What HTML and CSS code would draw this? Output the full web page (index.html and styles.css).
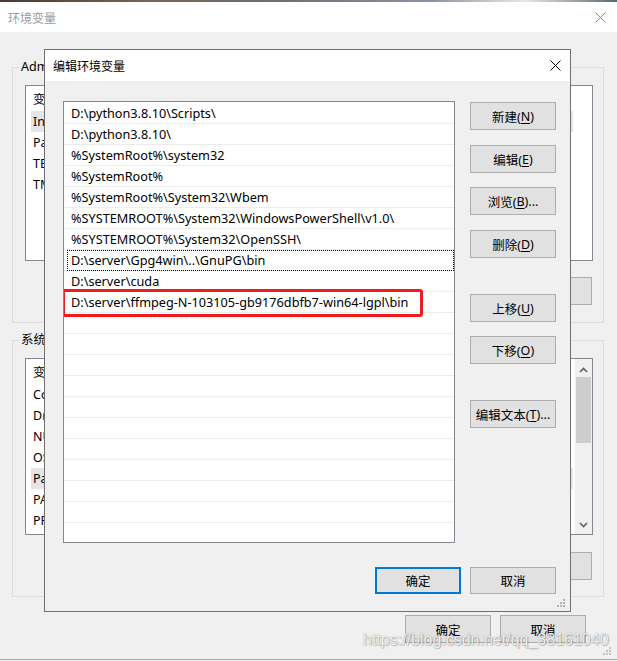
FILE: index.html
```html
<!DOCTYPE html>
<html lang="zh-CN">
<head>
<meta charset="utf-8">
<title>编辑环境变量</title>
<link rel="stylesheet" href="styles.css">
</head>
<body>
<div class="desk"></div>
<div class="win">
  <div class="win-title">
    <span class="win-caption">环境变量</span>
    <svg class="x-icon" width="11" height="11" viewBox="0 0 11 11"><path d="M0.5 0.5L10.5 10.5M10.5 0.5L0.5 10.5" stroke="#8a8a8a" stroke-width="1" fill="none"/></svg>
  </div>
  <div class="win-body">
    <fieldset class="group g1">
      <legend>Administrator 的用户变量(<u>U</u>)</legend>
      <div class="lv lv1">
        <div class="lv-main">
          <div class="lv-head"><span class="c1">变量</span></div>
          <div class="lv-row sel"><span class="c1">IntelliJ IDEA</span></div>
          <div class="lv-row"><span class="c1">Path</span></div>
          <div class="lv-row"><span class="c1">TEMP</span></div>
          <div class="lv-row"><span class="c1">TMP</span></div>
        </div>
      </div>
      <div class="btnrow">
        <button class="btn">新建(<u>N</u>)...</button>
        <button class="btn">编辑(<u>E</u>)...</button>
        <button class="btn">删除(<u>D</u>)</button>
      </div>
    </fieldset>
    <fieldset class="group g2">
      <legend>系统变量(<u>S</u>)</legend>
      <div class="lv lv2">
        <div class="lv-main">
          <div class="lv-head"><span class="c1">变量</span></div>
          <div class="lv-row"><span class="c1">ComSpec</span></div>
          <div class="lv-row"><span class="c1">DriverData</span></div>
          <div class="lv-row"><span class="c1">NUMBER_OF_PROCESSORS</span></div>
          <div class="lv-row"><span class="c1">OS</span></div>
          <div class="lv-row sel"><span class="c1">Path</span></div>
          <div class="lv-row"><span class="c1">PATHEXT</span></div>
          <div class="lv-row"><span class="c1">PROCESSOR_ARCHITECTURE</span></div>
        </div>
        <div class="sb">
          <div class="sb-btn"><svg width="9" height="6" viewBox="0 0 9 6"><path d="M1 5L4.5 1.5L8 5" stroke="#606060" stroke-width="1.6" fill="none"/></svg></div>
          <div class="sb-track"><div class="sb-thumb"></div></div>
          <div class="sb-btn"><svg width="9" height="6" viewBox="0 0 9 6"><path d="M1 1L4.5 4.5L8 1" stroke="#606060" stroke-width="1.6" fill="none"/></svg></div>
        </div>
      </div>
      <div class="btnrow">
        <button class="btn">新建(<u>W</u>)...</button>
        <button class="btn">编辑(<u>I</u>)...</button>
        <button class="btn">删除(<u>L</u>)</button>
      </div>
    </fieldset>
    <div class="win-foot">
      <button class="btn">确定</button>
      <button class="btn">取消</button>
    </div>
  </div>
  <svg class="grip win-grip" width="9" height="9" viewBox="0 0 9 9"><g fill="#c4c4c4"><rect x="6" y="0" width="2" height="2"/><rect x="3" y="3" width="2" height="2"/><rect x="6" y="3" width="2" height="2"/><rect x="0" y="6" width="2" height="2"/><rect x="3" y="6" width="2" height="2"/><rect x="6" y="6" width="2" height="2"/></g></svg>
</div>

<div class="dlg">
  <div class="dlg-title">
    <span class="dlg-caption">编辑环境变量</span>
    <svg class="x-icon" width="11" height="11" viewBox="0 0 11 11"><path d="M0.5 0.5L10.5 10.5M10.5 0.5L0.5 10.5" stroke="#000" stroke-width="1" fill="none"/></svg>
  </div>
  <div class="dlg-body">
    <div class="dlg-main">
      <div class="plist">
        <div class="prow">D:\python3.8.10\Scripts\</div>
        <div class="prow">D:\python3.8.10\</div>
        <div class="prow">%SystemRoot%\system32</div>
        <div class="prow">%SystemRoot%</div>
        <div class="prow">%SystemRoot%\System32\Wbem</div>
        <div class="prow">%SYSTEMROOT%\System32\WindowsPowerShell\v1.0\</div>
        <div class="prow">%SYSTEMROOT%\System32\OpenSSH\</div>
        <div class="prow focus">D:\server\Gpg4win\..\GnuPG\bin</div>
        <div class="prow">D:\server\cuda</div>
        <div class="prow">D:\server\ffmpeg-N-103105-gb9176dbfb7-win64-lgpl\bin</div>
        <div class="prow"></div>
        <div class="prow"></div>
        <div class="prow"></div>
        <div class="prow"></div>
        <div class="prow"></div>
        <div class="prow"></div>
        <div class="prow"></div>
        <div class="prow"></div>
        <div class="prow"></div>
        <div class="prow"></div>
        <div class="mark"></div>
      </div>
      <div class="dlg-btns">
        <button class="btn">新建(<u>N</u>)</button>
        <button class="btn mt1">编辑(<u>E</u>)</button>
        <button class="btn">浏览(<u>B</u>)...</button>
        <button class="btn mt1">删除(<u>D</u>)</button>
        <button class="btn mt22">上移(<u>U</u>)</button>
        <button class="btn">下移(<u>O</u>)</button>
        <button class="btn mt22">编辑文本(<u>T</u>)...</button>
      </div>
    </div>
    <div class="dlg-foot">
      <button class="btn default">确定</button>
      <button class="btn">取消</button>
    </div>
  </div>
  <svg class="grip dlg-grip" width="9" height="9" viewBox="0 0 9 9"><g fill="#b0b0b0"><rect x="6" y="0" width="2" height="2"/><rect x="3" y="3" width="2" height="2"/><rect x="6" y="3" width="2" height="2"/><rect x="0" y="6" width="2" height="2"/><rect x="3" y="6" width="2" height="2"/><rect x="6" y="6" width="2" height="2"/></g></svg>
</div>

<div class="watermark">https://blog.csdn.net/qq_38161040</div>
</body>
</html>
```

FILE: styles.css
```css
* { box-sizing: border-box; }
html, body { margin: 0; padding: 0; }
body {
  width: 617px;
  height: 661px;
  overflow: hidden;
  position: relative;
  background: #f0f0f0;
  font-family: "Noto Sans", "Noto Sans CJK SC", sans-serif;
  font-size: 12.5px;
  color: #000;
}
u { text-decoration: underline; text-underline-offset: 2px; }

.desk {
  height: 2px;
  background: linear-gradient(90deg, #4b3b30 0%, #7d6652 25%, #6b6f76 45%, #8a94a0 70%, #e8e8e8 85%, #5a6a72 100%);
}

/* background window */
.win {
  height: 658px;
  border-bottom: 1px solid #a8a8a8;
  display: flex;
  flex-direction: column;
  position: relative;
}
.win-title {
  height: 30px;
  background: #fff;
  display: flex;
  align-items: center;
  justify-content: space-between;
  padding: 0 11px 0 8px;
  color: #9a9a9a;
  font-size: 12px;
}
.win-caption { font-family: "Noto Sans CJK SC", sans-serif; }
.win-body {
  flex: 1;
  padding: 0 13px 0 12px;
  display: flex;
  flex-direction: column;
}
.group {
  margin: 0;
  min-width: 0;
  border: 1px solid #dcdcdc;
  padding: 10px 10px 17px 12px;
}
.g1 { margin-top: 27px; }
.g2 { margin-top: 9px; padding-bottom: 16px; }
.group legend {
  line-height: 16px;
  padding: 0 2px;
  margin-left: -6px;
}
.lv {
  background: #fff;
  border: 1px solid #828790;
  display: flex;
  overflow: hidden;
}
.lv1 { height: 176px; }
.lv2 { height: 177px; }
.lv-main { flex: 1; padding-left: 5px; min-width: 0; }
.lv-head, .lv-row {
  display: flex;
  align-items: center;
  white-space: nowrap;
  width: 542px;
}
.lv-head { height: 25px; }
.lv-row { height: 21px; }
.lv-row.sel { background: #e5e5e5; }
.lv .c1 { width: 170px; padding-left: 2px; overflow: hidden; }
.sb {
  width: 17px;
  display: flex;
  flex-direction: column;
  background: #f0f0f0;
}
.sb-btn {
  height: 17px;
  display: flex;
  align-items: center;
  justify-content: center;
  padding-top: 4px;
}
.sb-btn + .sb-track + .sb-btn { padding-top: 0; padding-bottom: 2px; }
.sb-track { flex: 1; padding: 1px 1px 0 1px; }
.sb-thumb { height: 66px; background: #cdcdcd; }

.btnrow {
  display: flex;
  justify-content: flex-end;
  gap: 10px;
  margin-top: 16px;
  padding-right: 1px;
}
.g2 .btnrow { margin-top: 17px; }

.win-foot {
  display: flex;
  justify-content: flex-end;
  gap: 9px;
  margin-top: 18px;
  padding-right: 18px;
}

.btn {
  width: 86px;
  height: 28px;
  background: #e1e1e1;
  border: 1px solid #adadad;
  color: #000;
  font: inherit;
  font-family: "Noto Sans", "Noto Sans CJK SC", sans-serif;
  padding: 0;
  display: flex;
  align-items: center;
  justify-content: center;
}
.btn.default { border: 2px solid #0078d7; }

.grip { position: absolute; }
.win-grip { right: 5px; bottom: 3px; }

/* foreground dialog */
.dlg {
  position: absolute;
  left: 44px;
  top: 49px;
  width: 527px;
  height: 563px;
  border: 1px solid #707070;
  background: #f0f0f0;
  display: flex;
  flex-direction: column;
}
.dlg-title {
  height: 31px;
  background: #fff;
  display: flex;
  align-items: center;
  justify-content: space-between;
  padding: 0 9px 0 8px;
  font-size: 12px;
}
.dlg-caption { font-family: "Noto Sans CJK SC", sans-serif; }
.dlg-body {
  flex: 1;
  padding: 20px 14px 0 18px;
  display: flex;
  flex-direction: column;
}
.dlg-main { display: flex; gap: 15px; }
.plist {
  width: 392px;
  height: 442px;
  background: #fff;
  border: 1px solid #828790;
  padding-top: 1px;
  position: relative;
  overflow: hidden;
  font-size: 12.7px;
}
.prow {
  height: 21px;
  border-bottom: 1px solid #ececec;
  padding-left: 7px;
  line-height: 20px;
  white-space: nowrap;
  position: relative;
}
.prow.focus::before {
  content: "";
  position: absolute;
  left: 3px;
  right: 0;
  top: 0;
  bottom: -1px;
  border: 1px dotted #000;
}
.mark {
  position: absolute;
  left: -2px;
  top: 187px;
  width: 361px;
  height: 28px;
  border: 3px solid #ee1c1c;
  border-radius: 3px;
}
.dlg-btns {
  display: flex;
  flex-direction: column;
  gap: 14px;
  padding-top: 1px;
}
.mt1 { margin-top: 1px; }
.mt22 { margin-top: 22px; }
.dlg-foot {
  display: flex;
  justify-content: flex-end;
  gap: 9px;
  margin-top: 24px;
}
.dlg-foot .btn { height: 27px; }
.dlg-grip { right: 4px; bottom: 3px; }

.watermark {
  position: absolute;
  left: 363px;
  top: 631px;
  font-family: "Liberation Sans", Arial, sans-serif;
  font-size: 16px;
  color: rgba(255, 255, 255, 0.9);
  text-shadow: 0 0 1px rgba(0, 0, 0, 0.45), 1px 1px 1px rgba(0, 0, 0, 0.2);
  white-space: nowrap;
}
```
